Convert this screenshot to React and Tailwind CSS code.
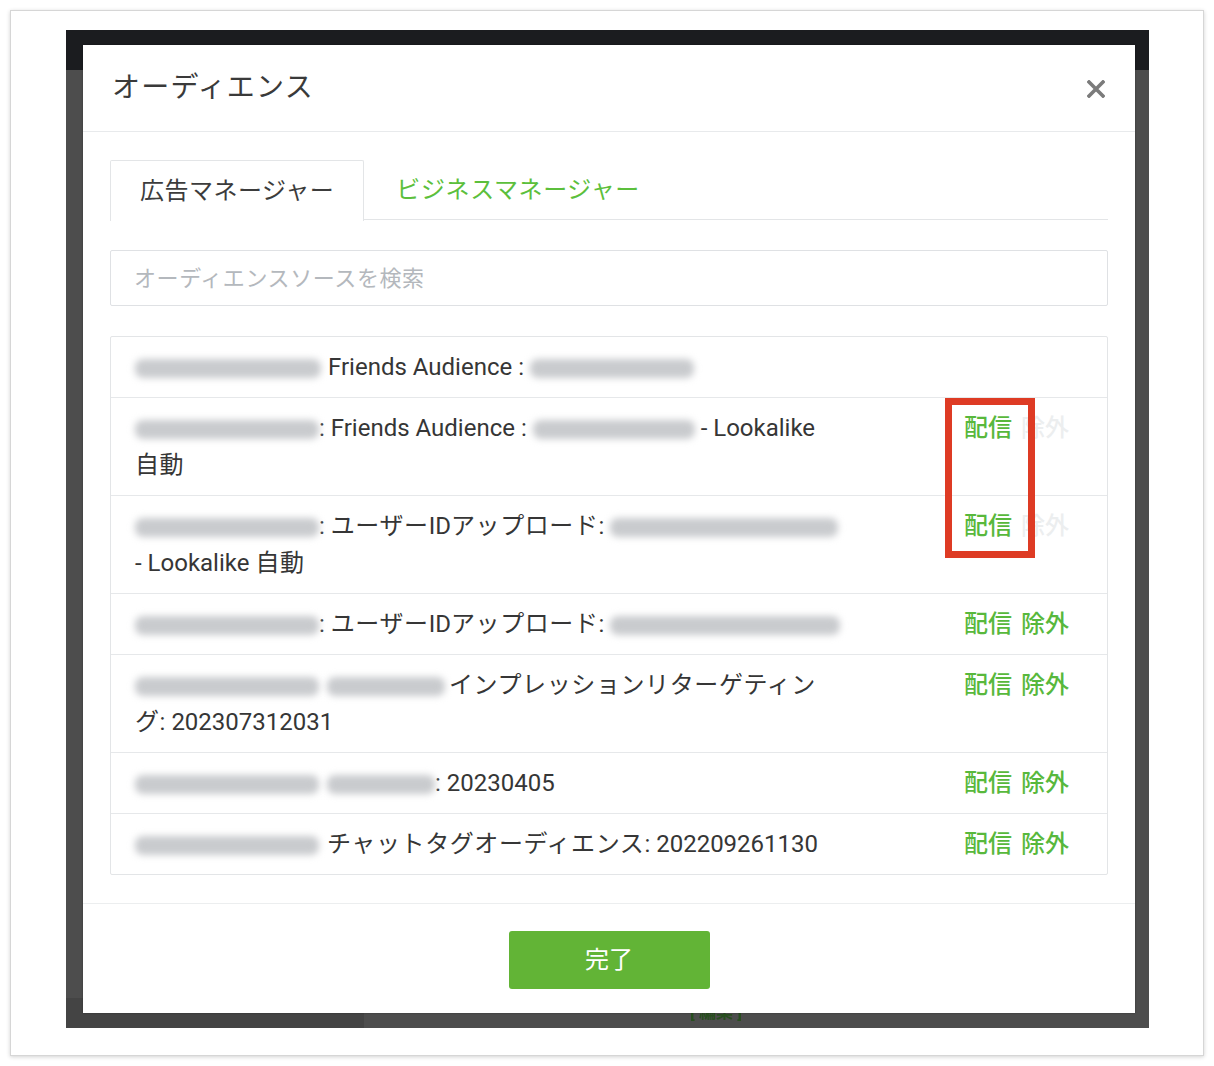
import React from "react";

const FONT = { fontFamily: 'Roboto, "Noto Sans CJK JP", sans-serif' };

function Blur({ w }) {
  return (
    <span
      className="inline-block h-[19px] rounded-[8px] bg-[#c9cbce] blur-[3.5px] align-[-3px]"
      style={{ width: w }}
    />
  );
}

function J({ children }) {
  return <span className="tracking-[0.6px]">{children}</span>;
}

function Actions({ disabledExclude }) {
  return (
    <div className="flex gap-[9px] text-[24px] leading-[37px] font-medium whitespace-nowrap">
      <span className="text-[#58b83c]">配信</span>
      <span className={disabledExclude ? "text-[#eceeef]" : "text-[#58b83c]"}>除外</span>
    </div>
  );
}

function Row({ children, actions, disabledExclude, last }) {
  return (
    <div
      className={
        "flex items-start pl-[24px] pr-[38px] py-[11.5px] " +
        (last ? "" : "border-b border-[#e6e8ea]")
      }
    >
      <div className="flex-1 whitespace-nowrap text-[24px] leading-[37px] text-[#363636]">
        {children}
      </div>
      {actions && <Actions disabledExclude={disabledExclude} />}
    </div>
  );
}

export default function App() {
  return (
    <div className="w-[1214px] h-[1066px] bg-white p-[10px]" style={FONT}>
      <div className="h-[1046px] w-[1194px] border border-[#d6d6d6] bg-white shadow-[0_1px_4px_rgba(0,0,0,0.18)] pt-[19px] pl-[55px]">
        <div className="relative w-[1083px] h-[998px] bg-[#4d4d4d] flex flex-col">
          <div className="h-[40px] bg-[#1b1c1f]" />
          <div className="flex-1" />
          <div className="h-[30px] flex items-center">
            <div className="w-[298px] h-full bg-[#444444]" />
            <div className="ml-[326px] text-[17px] font-bold text-[#1f4f14] opacity-80">[ 編集 ]</div>
          </div>

          {/* Modal */}
          <div className="absolute left-[17px] top-[15px] w-[1052px] h-[968px] bg-white flex flex-col shadow-[0_0_2px_rgba(0,0,0,0.3)]">
            <div className="h-[87px] shrink-0 border-b border-[#e8eaec] flex items-center justify-between pl-[29px] pr-[29px]">
              <div className="text-[28px] text-[#3a3a3a] tracking-[1.2px]">オーディエンス</div>
              <svg width="18" height="18" viewBox="0 0 18 18" className="mr-[1px] mt-[2px]">
                <path d="M2 2 L16 16 M16 2 L2 16" stroke="#7b7b7b" strokeWidth="3.6" strokeLinecap="square" />
              </svg>
            </div>

            <div className="flex-1 px-[27px] pt-[28px]">
              {/* Tabs */}
              <div className="flex h-[60px] border-b border-[#e3e5e7]">
                <div className="h-[61px] px-[29px] border border-b-0 border-[#e3e5e7] bg-white flex items-center text-[24px] tracking-[0.5px] text-[#3c3c3c] rounded-t-[2px]">
                  広告マネージャー
                </div>
                <div className="h-full pl-[32px] flex items-center text-[24px] tracking-[0.6px] text-[#5cbf3c]">
                  ビジネスマネージャー
                </div>
              </div>

              {/* Search */}
              <div className="mt-[30px] h-[56px] border border-[#dfe1e4] rounded-[2px] flex items-center pl-[23px] text-[22px] tracking-[0.6px] text-[#b4b8bd]">
                オーディエンスソースを検索
              </div>

              {/* List */}
              <div className="relative mt-[30px] border border-[#e3e5e7] rounded-[2px]">
                <Row>
                  <Blur w={186} /><span className="ml-[7px]">Friends Audience : </span><Blur w={164} />
                </Row>
                <Row actions disabledExclude>
                  <Blur w={184} />: Friends Audience : <Blur w={162} /> - Lookalike
                  <br /><J>自動</J>
                </Row>
                <Row actions disabledExclude>
                  <Blur w={184} />: <J>ユーザー</J>ID<J>アップロード</J>: <Blur w={228} />
                  <br />- Lookalike <J>自動</J>
                </Row>
                <Row actions>
                  <Blur w={184} />: <J>ユーザー</J>ID<J>アップロード</J>: <Blur w={230} />
                </Row>
                <Row actions>
                  <Blur w={184} /><span className="ml-[8px]" /><Blur w={118} /><span className="ml-[4px]"><J>インプレッションリターゲティン</J></span>
                  <br /><J>グ</J>: 202307312031
                </Row>
                <Row actions>
                  <Blur w={184} /><span className="ml-[8px]" /><Blur w={108} />: 20230405
                </Row>
                <Row actions last>
                  <Blur w={184} /><span className="ml-[8px]"><J>チャットタグオーディエンス</J>: 202209261130</span>
                </Row>

                {/* annotation box */}
                <div className="absolute left-[834px] top-[61px] w-[90px] h-[160px] border-[7px] border-[#de3b24]" />
              </div>
            </div>

            {/* Footer */}
            <div className="h-[110px] shrink-0 border-t border-[#eceeef] flex justify-center pt-[27px]">
              <div className="w-[201px] h-[58px] bg-[#62b436] rounded-[3px] flex items-center justify-center text-[24px] text-white">
                完了
              </div>
            </div>
          </div>
        </div>
      </div>
    </div>
  );
}
